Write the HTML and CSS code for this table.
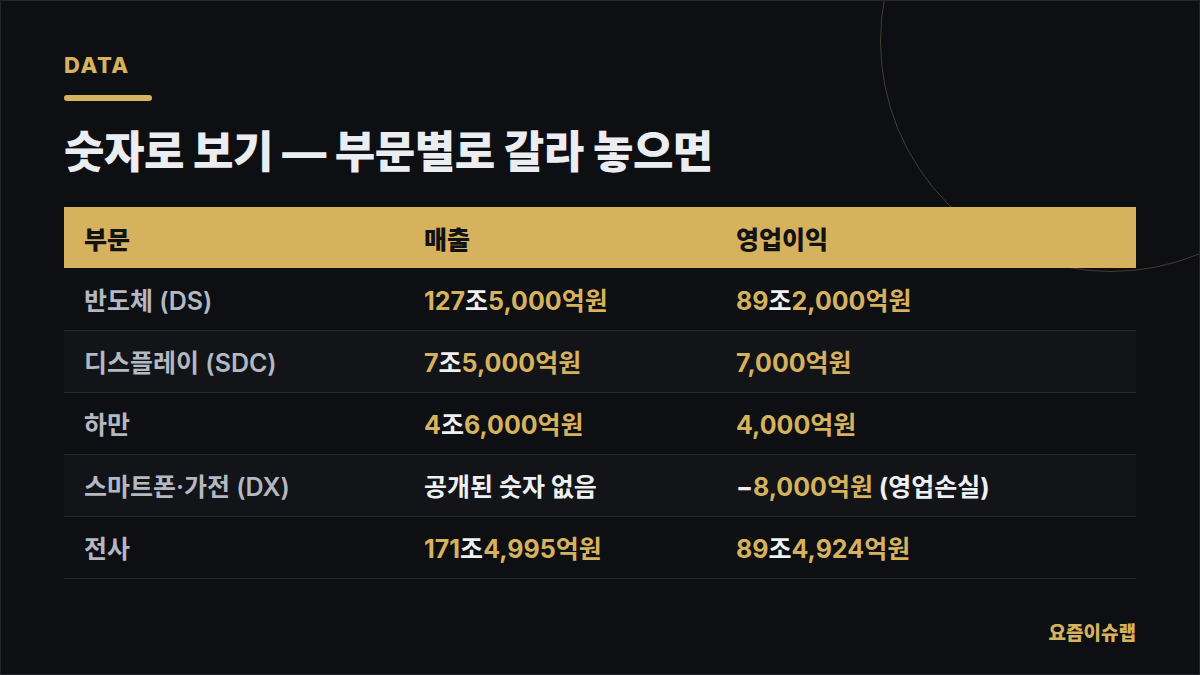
FILE: index.html
```html
<!DOCTYPE html>
<html lang="ko">
<head>
<meta charset="utf-8">
<title>숫자로 보기</title>
<link rel="stylesheet" href="styles.css">
</head>
<body>
<div class="frame">
  <div class="ring"></div>
  <div class="content">
    <div class="eyebrow">DATA</div>
    <div class="bar"></div>
    <h1 class="title">숫자로 보기 — 부문별로 갈라 놓으면</h1>
    <table class="data">
      <thead>
        <tr><th class="c1">부문</th><th class="c2">매출</th><th class="c3">영업이익</th></tr>
      </thead>
      <tbody>
        <tr>
          <td class="label">반도체 (DS)</td>
          <td class="num">127<span class="w">조</span>5,000억원</td>
          <td class="num">89<span class="w">조</span>2,000억원</td>
        </tr>
        <tr class="alt">
          <td class="label">디스플레이 (SDC)</td>
          <td class="num">7<span class="w">조</span>5,000억원</td>
          <td class="num">7,000억원</td>
        </tr>
        <tr>
          <td class="label">하만</td>
          <td class="num">4<span class="w">조</span>6,000억원</td>
          <td class="num">4,000억원</td>
        </tr>
        <tr class="alt">
          <td class="label">스마트폰·가전 (DX)</td>
          <td class="plain">공개된 숫자 없음</td>
          <td class="num"><span class="w">−</span>8,000억원 <span class="w">(영업손실)</span></td>
        </tr>
        <tr>
          <td class="label">전사</td>
          <td class="num">171<span class="w">조</span>4,995억원</td>
          <td class="num">89<span class="w">조</span>4,924억원</td>
        </tr>
      </tbody>
    </table>
    <div class="footer">요즘이슈랩</div>
  </div>
</div>
</body>
</html>
```

FILE: styles.css
```css
* { box-sizing: border-box; }
html, body { margin: 0; padding: 0; background: #0d0f13; }
body {
  font-family: "Inter", "Noto Sans CJK KR", sans-serif;
}
.frame {
  position: relative;
  width: 1200px;
  height: 675px;
  border: 1px solid #23262c;
  background: #0d0f13;
  overflow: hidden;
}
.ring {
  position: absolute;
  left: 879px;
  top: -191px;
  width: 462px;
  height: 462px;
  border-radius: 50%;
  border: 1px solid rgba(214, 178, 94, 0.28);
}
.content {
  position: relative;
  z-index: 1;
  height: 100%;
  padding: 52px 63px 0 63px;
  display: flex;
  flex-direction: column;
}
.eyebrow {
  color: #d6b25e;
  font-size: 22px;
  line-height: 24px;
  font-weight: 800;
  letter-spacing: 0.07em;
}
.bar {
  width: 88px;
  height: 6px;
  border-radius: 3px;
  background: #d6b25e;
  margin-top: 18px;
}
.title {
  margin: 25px 0 0 0;
  color: #ecedf1;
  font-size: 44px;
  line-height: 52px;
  font-weight: 800;
  letter-spacing: -0.5px;
}
.data {
  margin-top: 29px;
  width: 1072px;
  border-collapse: collapse;
  table-layout: fixed;
  font-size: 25px;
}
.data th {
  background: #d6b25e;
  color: #111214;
  text-align: left;
  font-weight: 800;
  height: 61px;
  padding: 0 20px;
}
.c1 { width: 340px; }
.c2 { width: 312px; }
.c3 { width: 420px; }
.data td {
  height: 62px;
  padding: 0 20px;
  border-bottom: 1px solid #23262c;
  font-weight: 700;
  white-space: nowrap;
}
.data tr.alt td { background: #121418; }
.label { color: #b3b8c2; font-weight: 600 !important; }
.num { color: #d6b25e; }
.w { color: #eef0f4; }
.plain { color: #eef0f4; }
.footer {
  margin-top: auto;
  margin-bottom: 29px;
  align-self: flex-end;
  color: #d6b25e;
  font-size: 19px;
  font-weight: 800;
}
```
